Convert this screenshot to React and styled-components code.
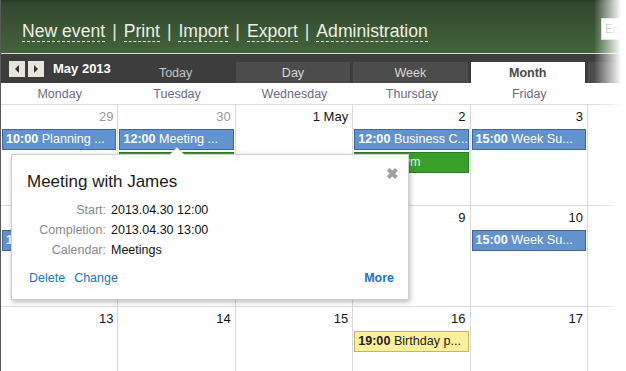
import React from "react";
import styled, { createGlobalStyle, css } from "styled-components";

const GlobalStyle = createGlobalStyle`
  html, body {
    margin: 0;
    padding: 0;
    background: #fff;
    overflow: hidden;
  }
  body {
    font-family: "Liberation Sans", Arial, sans-serif;
  }
`;

const COL = "117.4px";

const Frame = styled.div`
  position: relative;
  width: 626px;
  height: 371px;
  overflow: hidden;
  box-sizing: border-box;
  border-left: 1px solid #5a5a5a;
  background: #fff;
`;

const Header = styled.div`
  height: 54px;
  box-sizing: border-box;
  display: flex;
  align-items: center;
  padding: 0 0 0 21px;
  background: linear-gradient(#2a3a28 0px, #34492f 4px, #3e5c37 40px, #43643b 53px);
  border-bottom: 1px solid #d4dccf;
`;

const Nav = styled.nav`
  display: flex;
  align-items: baseline;
  gap: 7px;
  font-size: 17.6px;
  color: #eef0e6;
  padding-top: 9px;
  white-space: nowrap;
`;

const NavLink = styled.span`
  border-bottom: 1px dashed #dfe3d8;
  line-height: 20px;
`;

const Sep = styled.span`
  color: #e6e8de;
`;

const Search = styled.div`
  width: 160px;
  height: 22px;
  box-sizing: border-box;
  margin: 4px -135px 0 auto;
  border: 1px solid #c9ccc4;
  background: #fff;
  color: #a9a9a9;
  font-size: 12px;
  line-height: 20px;
  padding-left: 3px;
  flex-shrink: 0;
  white-space: nowrap;
`;

const Toolbar = styled.div`
  height: 29px;
  background: #3d3d3d;
  display: grid;
  grid-template-columns: repeat(6, ${COL});
  align-items: end;
`;

const Pager = styled.div`
  display: flex;
  align-items: center;
  height: 29px;
  padding-left: 8px;
  gap: 3px;
  white-space: nowrap;
`;

const ArrowBtn = styled.div`
  width: 16px;
  height: 16px;
  background: #e7e5dc;
  display: flex;
  align-items: center;
  justify-content: center;
  margin-top: 1px;
`;

const MonthTitle = styled.div`
  color: #fff;
  font-weight: bold;
  font-size: 13px;
  margin-left: 6px;
`;

const Tab = styled.div`
  height: 21px;
  line-height: 22px;
  text-align: center;
  font-size: 12.5px;
  margin-right: 3px;
  white-space: nowrap;
  ${(p) =>
    p.$kind === "plain" &&
    css`
      background: transparent;
      color: #c6c6c6;
    `}
  ${(p) =>
    p.$kind === "tab" &&
    css`
      background: #4c4c4c;
      color: #d9d9d9;
    `}
  ${(p) =>
    p.$kind === "active" &&
    css`
      background: #fff;
      color: #4a4a4a;
      font-weight: bold;
    `}
`;

const DayNames = styled.div`
  display: grid;
  grid-template-columns: repeat(6, ${COL});
  height: 21px;
  border-bottom: 1px solid #dcdcdc;
`;

const DayName = styled.div`
  text-align: center;
  font-size: 12.5px;
  line-height: 22px;
  color: #6e6a88;
`;

const Grid = styled.div`
  display: grid;
  grid-template-columns: repeat(6, ${COL});
  grid-auto-rows: 101px;
`;

const Cell = styled.div`
  box-sizing: border-box;
  border-right: 1px solid #dadada;
  border-bottom: 1px solid #dadada;
  padding: 4px 1px 0 1px;
  display: flex;
  flex-direction: column;
  gap: 2px;
  min-width: 0;
`;

const DayNum = styled.div`
  text-align: right;
  font-size: 13px;
  height: 18px;
  line-height: 16px;
  padding-right: 3px;
  color: ${(p) => (p.$muted ? "#9a9a9a" : "#151515")};
`;

const eventColors = {
  blue: { bg: "#6293cf", border: "#43669a", fg: "#fff" },
  green: { bg: "#38a02a", border: "#2c7d22", fg: "#e9f7e4" },
  yellow: { bg: "#fdf09a", border: "#c7b65c", fg: "#222" },
};

const Event = styled.div`
  height: 21px;
  box-sizing: border-box;
  border: 1px solid ${(p) => eventColors[p.$color].border};
  background: ${(p) => eventColors[p.$color].bg};
  color: ${(p) => eventColors[p.$color].fg};
  font-size: 12.6px;
  line-height: 19px;
  padding-left: 3px;
  white-space: nowrap;
  overflow: hidden;
  b {
    font-weight: bold;
  }
`;

const Popup = styled.div`
  position: absolute;
  left: 10px;
  top: 154px;
  width: 398px;
  height: 146px;
  box-sizing: border-box;
  background: #fff;
  border: 1px solid #cfcfcf;
  box-shadow: 1px 2px 5px rgba(0, 0, 0, 0.28);
  padding: 17px 14px 0 15px;
  display: flex;
  flex-direction: column;
`;

const Pointer = styled.div`
  position: absolute;
  left: 158px;
  top: -7px;
  width: 0;
  height: 0;
  border-left: 7px solid transparent;
  border-right: 7px solid transparent;
  border-bottom: 7px solid #fff;
  filter: drop-shadow(0 -1px 0 #cfcfcf);
`;

const Close = styled.div`
  position: absolute;
  right: 9px;
  top: 10px;
  color: #a0a0a0;
  font-size: 15px;
  font-weight: bold;
`;

const Title = styled.div`
  font-size: 17px;
  color: #1a1a1a;
  margin-bottom: 10px;
`;

const Details = styled.div`
  display: grid;
  grid-template-columns: 79px 1fr;
  column-gap: 5px;
  row-gap: 4px;
  font-size: 12.5px;
  line-height: 16px;
`;

const Label = styled.div`
  text-align: right;
  color: #8a8a8a;
`;

const Value = styled.div`
  color: #111;
`;

const Actions = styled.div`
  display: flex;
  align-items: center;
  margin-top: 13px;
  padding-left: 2px;
  font-size: 12.5px;
  color: #1d72c9;
  gap: 9px;
`;

const More = styled.span`
  margin-left: auto;
  font-weight: bold;
`;

const Fade = styled.div`
  position: absolute;
  top: 0;
  right: 0;
  width: 32px;
  height: 100%;
  background: linear-gradient(to right, rgba(255, 255, 255, 0), #fff 85%);
  pointer-events: none;
`;

const Tri = ({ dir }) => (
  <svg width="6" height="8" viewBox="0 0 6 8">
    {dir === "left" ? (
      <path d="M5 0 L5 8 L1 4 Z" fill="#333" />
    ) : (
      <path d="M1 0 L1 8 L5 4 Z" fill="#333" />
    )}
  </svg>
);

const weeks = [
  [
    { d: "29", muted: true, ev: [{ c: "blue", t: "10:00", n: "Planning ..." }] },
    {
      d: "30",
      muted: true,
      ev: [
        { c: "blue", t: "12:00", n: "Meeting ..." },
        { c: "green", t: "18:00", n: "Gym" },
      ],
    },
    { d: "1 May", ev: [] },
    {
      d: "2",
      ev: [
        { c: "blue", t: "12:00", n: "Business C..." },
        { c: "green", t: "18:00", n: "Gym" },
      ],
    },
    { d: "3", ev: [{ c: "blue", t: "15:00", n: "Week Su..." }] },
    { d: "4", ev: [] },
  ],
  [
    { d: "6", ev: [{ c: "blue", t: "10:00", n: "Planning ..." }] },
    { d: "7", ev: [] },
    { d: "8", ev: [] },
    { d: "9", ev: [] },
    { d: "10", ev: [{ c: "blue", t: "15:00", n: "Week Su..." }] },
    { d: "11", ev: [] },
  ],
  [
    { d: "13", ev: [] },
    { d: "14", ev: [] },
    { d: "15", ev: [] },
    { d: "16", ev: [{ c: "yellow", t: "19:00", n: "Birthday p..." }] },
    { d: "17", ev: [] },
    { d: "18", ev: [] },
  ],
];

const links = ["New event", "Print", "Import", "Export", "Administration"];
const days = ["Monday", "Tuesday", "Wednesday", "Thursday", "Friday", "Saturday"];

export default function App() {
  return (
    <>
      <GlobalStyle />
      <Frame>
        <Header>
          <Nav>
            {links.map((l, i) => (
              <React.Fragment key={l}>
                {i > 0 && <Sep>|</Sep>}
                <NavLink>{l}</NavLink>
              </React.Fragment>
            ))}
          </Nav>
          <Search>Enter text</Search>
        </Header>

        <Toolbar>
          <Pager>
            <ArrowBtn>
              <Tri dir="left" />
            </ArrowBtn>
            <ArrowBtn>
              <Tri dir="right" />
            </ArrowBtn>
            <MonthTitle>May 2013</MonthTitle>
          </Pager>
          <Tab $kind="plain">Today</Tab>
          <Tab $kind="tab">Day</Tab>
          <Tab $kind="tab">Week</Tab>
          <Tab $kind="active">Month</Tab>
          <Tab $kind="tab">List</Tab>
        </Toolbar>

        <DayNames>
          {days.map((d) => (
            <DayName key={d}>{d}</DayName>
          ))}
        </DayNames>

        <Grid>
          {weeks.flat().map((c, i) => (
            <Cell key={i}>
              <DayNum $muted={c.muted}>{c.d}</DayNum>
              {c.ev.map((e, j) => (
                <Event key={j} $color={e.c}>
                  <b>{e.t}</b> {e.n}
                </Event>
              ))}
            </Cell>
          ))}
        </Grid>

        <Popup>
          <Pointer />
          <Close>✖</Close>
          <Title>Meeting with James</Title>
          <Details>
            <Label>Start:</Label>
            <Value>2013.04.30 12:00</Value>
            <Label>Completion:</Label>
            <Value>2013.04.30 13:00</Value>
            <Label>Calendar:</Label>
            <Value>Meetings</Value>
          </Details>
          <Actions>
            <span>Delete</span>
            <span>Change</span>
            <More>More</More>
          </Actions>
        </Popup>

        <Fade />
      </Frame>
    </>
  );
}
